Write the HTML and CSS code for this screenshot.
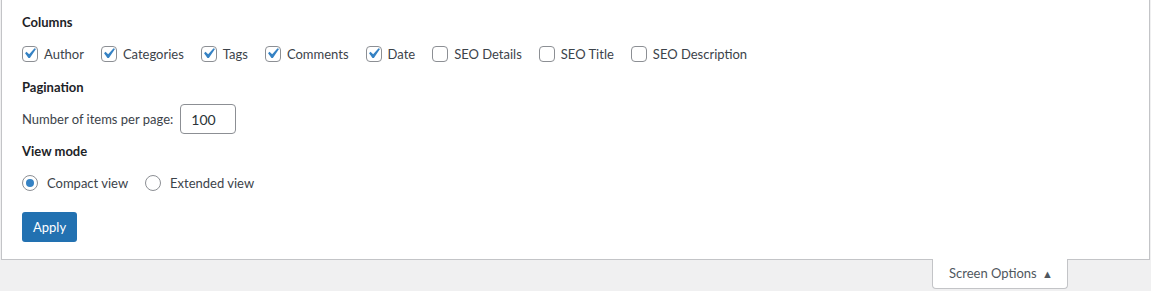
FILE: index.html
```html
<!DOCTYPE html>
<html lang="en">
<head>
    <meta charset="UTF-8">
    <meta name="viewport" content="width=device-width, initial-scale=1.0">
    <title>Screen Options</title>
    <link rel="stylesheet" href="styles.css">
</head>
<body>
    <div class="screen-meta">
        <form class="options-form">
            <fieldset class="prefs">
                <legend>Columns</legend>
                <div class="pref-row">
                    <label class="pref"><span class="box"><svg viewBox="0 0 20 20"><path d="M14.83 4.89l1.34.94-5.81 8.38H9.02L5.78 9.67l1.34-1.25 2.57 2.4z"/></svg></span>Author</label>
                    <label class="pref"><span class="box"><svg viewBox="0 0 20 20"><path d="M14.83 4.89l1.34.94-5.81 8.38H9.02L5.78 9.67l1.34-1.25 2.57 2.4z"/></svg></span>Categories</label>
                    <label class="pref"><span class="box"><svg viewBox="0 0 20 20"><path d="M14.83 4.89l1.34.94-5.81 8.38H9.02L5.78 9.67l1.34-1.25 2.57 2.4z"/></svg></span>Tags</label>
                    <label class="pref"><span class="box"><svg viewBox="0 0 20 20"><path d="M14.83 4.89l1.34.94-5.81 8.38H9.02L5.78 9.67l1.34-1.25 2.57 2.4z"/></svg></span>Comments</label>
                    <label class="pref"><span class="box"><svg viewBox="0 0 20 20"><path d="M14.83 4.89l1.34.94-5.81 8.38H9.02L5.78 9.67l1.34-1.25 2.57 2.4z"/></svg></span>Date</label>
                    <label class="pref"><span class="box"></span>SEO Details</label>
                    <label class="pref"><span class="box"></span>SEO Title</label>
                    <label class="pref"><span class="box"></span>SEO Description</label>
                </div>
            </fieldset>
            <fieldset class="prefs">
                <legend>Pagination</legend>
                <div class="per-page">
                    <label for="perPage">Number of items per page:</label>
                    <input type="text" id="perPage" class="number-input" value="100">
                </div>
            </fieldset>
            <fieldset class="prefs">
                <legend>View mode</legend>
                <div class="pref-row">
                    <label class="pref"><span class="radio checked"></span>Compact view</label>
                    <label class="pref"><span class="radio"></span>Extended view</label>
                </div>
            </fieldset>
            <button type="button" class="apply-button">Apply</button>
        </form>
    </div>
    <div class="meta-links">
        <button type="button" class="screen-tab">Screen Options <span class="arrow">&#9650;</span></button>
    </div>
</body>
</html>
```
FILE: styles.css
```css
body {
    font-family: Lato, "Open Sans", sans-serif;
    font-size: 13px;
    color: #3c434a;
    margin: 0;
    padding: 0;
    background-color: #f0f0f1;
}
.screen-meta {
    margin: 0 1px 0 1px;
    background: white;
    border: 1px solid #c3c4c7;
    border-top: none;
    padding: 12px 20px 17px 20px;
}
.options-form {
    display: flex;
    flex-direction: column;
    align-items: flex-start;
}
.prefs {
    border: none;
    margin: 0;
    padding: 0;
}
.prefs legend {
    padding: 0;
    font-size: 13px;
    font-weight: 700;
    line-height: 20px;
    color: #1d2327;
}
.pref-row {
    display: flex;
    margin-top: 7px;
    margin-bottom: 8px;
    height: 30px;
    align-items: center;
    gap: 17px;
}
.pref {
    display: flex;
    align-items: center;
    gap: 6px;
}
.box {
    width: 14px;
    height: 14px;
    border: 1px solid #8c8f94;
    border-radius: 4px;
    position: relative;
}
.box svg {
    position: absolute;
    left: -4px;
    top: -4px;
    width: 21px;
    height: 21px;
    fill: #3582c4;
}
.radio {
    width: 14px;
    height: 14px;
    border: 1px solid #8c8f94;
    border-radius: 50%;
    margin-right: 3px;
    display: flex;
    align-items: center;
    justify-content: center;
}
.radio.checked::before {
    content: "";
    width: 8px;
    height: 8px;
    border-radius: 50%;
    background: #3582c4;
}
.per-page {
    display: flex;
    align-items: center;
    gap: 7px;
    margin-top: 7px;
    margin-bottom: 7px;
}
.number-input {
    width: 56px;
    height: 30px;
    box-sizing: border-box;
    border: 1px solid #8c8f94;
    border-radius: 4px;
    padding: 0 10px;
    font-family: inherit;
    font-size: 14px;
    color: #2c3338;
}
.apply-button {
    margin-top: 6px;
    height: 30px;
    padding: 0 11px;
    border: none;
    border-radius: 3px;
    background-color: #2271b1;
    color: white;
    font-family: inherit;
    font-size: 13px;
}
.meta-links {
    display: flex;
    justify-content: flex-end;
    padding-right: 83px;
}
.screen-tab {
    margin-top: -1px;
    width: 136px;
    height: 30px;
    background: white;
    border: 1px solid #c3c4c7;
    border-top: none;
    border-radius: 0 0 4px 4px;
    color: #50575e;
    font-family: inherit;
    font-size: 13px;
    padding: 0 0 2px 2px;
}
.arrow {
    font-size: 11px;
    color: #50575e;
    margin-left: 2px;
}
```
